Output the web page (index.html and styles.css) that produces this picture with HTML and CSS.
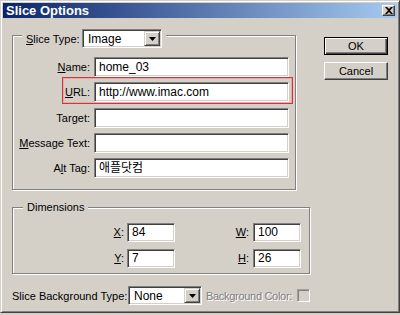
FILE: index.html
```html
<!DOCTYPE html>
<html>
<head>
<meta charset="utf-8">
<link rel="stylesheet" href="styles.css">
</head>
<body>
<div class="window">
  <div class="titlebar">
    <span class="title">Slice Options</span>
    <span class="close"><svg width="8" height="7" viewBox="0 0 8 7"><path d="M0 0h2l2 2 2-2h2L5 3.5 8 7H6L4 5 2 7H0l3-3.5z" fill="#000"/></svg></span>
  </div>
  <div class="main">
    <div class="left">
      <div class="group g1">
        <div class="legend">
          <span class="lbl"><u>S</u>lice Type:</span>
          <div class="select s1"><span>Image</span><span class="arrow"><svg width="7" height="4" viewBox="0 0 7 4"><path d="M0 0h7L3.5 4z" fill="#000"/></svg></span></div>
        </div>
        <div class="form">
          <label><u>N</u>ame:</label><div class="input">home_03</div>
          <label><u>U</u>RL:</label><div class="input">http://www.imac.com</div>
          <label>Tar<u>g</u>et:</label><div class="input"></div>
          <label><u>M</u>essage Text:</label><div class="input"></div>
          <label>A<u>l</u>t Tag:</label><div class="input ko">애플닷컴</div>
        </div>
        <div class="highlight"></div>
      </div>
      <div class="group g2">
        <div class="legend"><span>Dimensions</span></div>
        <div class="dims">
          <label class="l1"><u>X</u>:</label><div class="input">84</div>
          <label class="l2"><u>W</u>:</label><div class="input">100</div>
          <label class="l1"><u>Y</u>:</label><div class="input">7</div>
          <label class="l2"><u>H</u>:</label><div class="input">26</div>
        </div>
      </div>
      <div class="bottom">
        <span class="blbl">Slice Background Type:</span>
        <div class="select s2"><span>None</span><span class="arrow"><svg width="7" height="4" viewBox="0 0 7 4"><path d="M0 0h7L3.5 4z" fill="#000"/></svg></span></div>
        <span class="disabled">Background Color:</span>
        <span class="check"></span>
      </div>
    </div>
    <div class="right">
      <div class="btn default">OK</div>
      <div class="btn">Cancel</div>
    </div>
  </div>
</div>
</body>
</html>
```
FILE: styles.css
```css
body {
  margin: 0;
  background: #d4d0c8;
  font-family: "Liberation Sans", Arial, sans-serif;
  font-size: 11px;
  color: #000;
}
.window {
  width: 400px;
  height: 313px;
  box-sizing: border-box;
  border: 1px solid;
  border-color: #d4d0c8 #404040 #404040 #d4d0c8;
  box-shadow: inset 1px 1px #fff, inset -1px -1px #808080;
  padding: 2px;
  background: #d4d0c8;
}
.titlebar {
  height: 15px;
  display: flex;
  align-items: center;
  justify-content: space-between;
  padding: 0 2px 0 3px;
  background: linear-gradient(to right, #0a246a, #a6caf0);
}
.title {
  color: #fff;
  font-weight: bold;
  font-size: 13px;
  line-height: 15px;
}
.close {
  width: 13px;
  height: 11px;
  box-sizing: border-box;
  background: #d4d0c8;
  border: 1px solid;
  border-color: #fff #404040 #404040 #fff;
  box-shadow: inset -1px -1px #808080;
  display: flex;
  align-items: center;
  justify-content: center;
}
.close svg { display: block; }
.main {
  display: flex;
  align-items: flex-start;
  padding-left: 9px;
}
.left {
  width: 298px;
  margin-top: 17px;
}
.right {
  margin-left: 14px;
  margin-top: 19px;
  display: flex;
  flex-direction: column;
  gap: 7px;
}
.btn {
  width: 64px;
  height: 18px;
  box-sizing: border-box;
  border: 1px solid;
  border-color: #fff #404040 #404040 #fff;
  box-shadow: inset -1px -1px #808080;
  background: #d4d0c8;
  display: flex;
  align-items: center;
  justify-content: center;
}
.btn.default {
  border-color: #000;
  box-shadow: inset 1px 1px #fff, inset -1px -1px #404040, inset -2px -2px #808080;
}
.group {
  position: relative;
  box-sizing: border-box;
  border: 1px solid #808080;
  box-shadow: inset 1px 1px #fff, 1px 1px #fff;
}
.g1 {
  width: 284px;
  height: 155px;
  padding-top: 21px;
}
.g2 {
  margin-top: 17px;
  width: 298px;
  height: 67px;
  padding-top: 15px;
}
.legend {
  position: absolute;
  left: 9px;
  top: -7px;
  padding: 0 4px;
  background: #d4d0c8;
  display: flex;
  align-items: center;
}
.g2 .legend {
  left: 10px;
  height: 13px;
  line-height: 13px;
}
.legend .lbl { width: 56px; }
.form {
  display: grid;
  grid-template-columns: 77px 195px;
  column-gap: 4px;
  row-gap: 5.25px;
}
.form label, .dims label {
  text-align: right;
  line-height: 20px;
}
.input {
  height: 20px;
  box-sizing: border-box;
  background: #fff;
  border: 1px solid;
  border-color: #808080 #fff #fff #808080;
  box-shadow: inset 1px 1px #404040, inset -1px -1px #d4d0c8;
  padding: 0 4px;
  line-height: 18px;
  font-size: 12px;
  white-space: nowrap;
  overflow: hidden;
}
.ko {
  font-family: "Liberation Sans", "Noto Sans CJK KR", sans-serif;
}
.highlight {
  position: absolute;
  left: 49px;
  top: 41px;
  width: 231px;
  height: 27px;
  box-sizing: border-box;
  border: 1px solid #c83a3a;
  box-shadow: inset 1px 1px #eaa8a8, inset -1px -1px #eaa8a8;
}
.dims {
  display: grid;
  grid-template-columns: 114px 48px 78px 48px;
  row-gap: 7px;
}
.dims .input { height: 19px; line-height: 17px; }
.dims label { line-height: 19px; }
.dims .l1 { padding-right: 3px; }
.dims .l2 { padding-right: 4px; }
.select {
  height: 19px;
  box-sizing: border-box;
  background: #fff;
  border: 1px solid;
  border-color: #808080 #fff #fff #808080;
  box-shadow: inset 1px 1px #404040, inset -1px -1px #d4d0c8;
  display: flex;
  align-items: center;
  justify-content: space-between;
  padding: 0 1px 0 5px;
  font-size: 12px;
}
.s1 { width: 80px; }
.s2 { width: 74px; flex: none; }
.arrow {
  width: 16px;
  height: 15px;
  box-sizing: border-box;
  background: #d4d0c8;
  border: 1px solid;
  border-color: #d4d0c8 #404040 #404040 #d4d0c8;
  box-shadow: inset 1px 1px #fff, inset -1px -1px #808080;
  display: flex;
  align-items: center;
  justify-content: center;
}
.arrow svg { display: block; }
.bottom {
  margin-top: 12px;
  display: flex;
  align-items: center;
}
.blbl { width: 116px; flex: none; white-space: nowrap; }
.disabled {
  margin-left: 4px;
  white-space: nowrap;
  letter-spacing: -0.3px;
  color: #808080;
  text-shadow: 1px 1px #fff;
}
.check {
  margin-left: auto;
  flex: none;
  width: 13px;
  height: 13px;
  box-sizing: border-box;
  border: 1px solid;
  border-color: #a0a0a0 #fff #fff #a0a0a0;
  box-shadow: inset 1px 1px #808080;
  background: #d4d0c8;
}
```
